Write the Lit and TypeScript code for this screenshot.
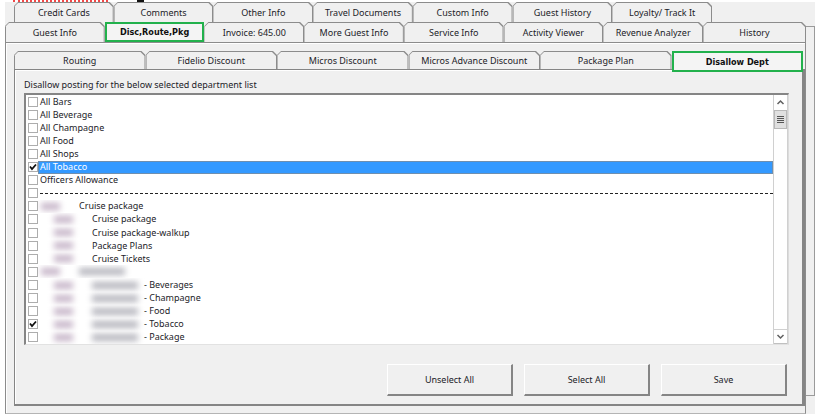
import { LitElement, html, css, svg, nothing } from "lit";
import { customElement, property, state } from "lit/decorators.js";
import { classMap } from "lit/directives/class-map.js";

interface Dept {
  name: string;
  kind: "plain" | "group" | "child" | "hidden-group" | "hidden-child" | "rule";
  checked?: boolean;
  selected?: boolean;
}

const BACK_TABS = ["Credit Cards", "Comments", "Other Info", "Travel Documents", "Custom Info", "Guest History", "Loyalty/ Track It"];
const FRONT_TABS = ["Guest Info", "Disc,Route,Pkg", "Invoice: 645.00", "More Guest Info", "Service Info", "Activity Viewer", "Revenue Analyzer", "History"];
const SUB_TABS = ["Routing", "Fidelio Discount", "Micros Discount", "Micros Advance Discount", "Package Plan", "Disallow Dept"];

const DEPTS: Dept[] = [
  { name: "All Bars", kind: "plain" },
  { name: "All Beverage", kind: "plain" },
  { name: "All Champagne", kind: "plain" },
  { name: "All Food", kind: "plain" },
  { name: "All Shops", kind: "plain" },
  { name: "All Tobacco", kind: "plain", checked: true, selected: true },
  { name: "Officers Allowance", kind: "plain" },
  { name: "", kind: "rule" },
  { name: "Cruise package", kind: "group" },
  { name: "Cruise package", kind: "child" },
  { name: "Cruise package-walkup", kind: "child" },
  { name: "Package Plans", kind: "child" },
  { name: "Cruise Tickets", kind: "child" },
  { name: "", kind: "hidden-group" },
  { name: "- Beverages", kind: "hidden-child" },
  { name: "- Champagne", kind: "hidden-child" },
  { name: "- Food", kind: "hidden-child" },
  { name: "- Tobacco", kind: "hidden-child", checked: true },
  { name: "- Package", kind: "hidden-child" },
];

@customElement("tab-strip")
class TabStrip extends LitElement {
  @property({ type: Array }) tabs: string[] = [];
  @property() active = "";

  static styles = css`
    :host { display: grid; grid-auto-flow: column; grid-auto-columns: minmax(0, 1fr); }
    :host(.front) { grid-template-columns: repeat(7, minmax(0, 1fr)) 103px; }
    .tab {
      position: relative;
      z-index: 0;
      border: 0;
      padding: 2px 0 0;
      font: inherit;
      color: #1c1c28;
      background: #8c8c8c;
      white-space: nowrap;
      clip-path: polygon(0 4px, 4px 0, calc(100% - 4px) 0, 100% 4px, 100% 100%, 0 100%);
    }
    .tab::before {
      content: "";
      position: absolute;
      inset: 1px 1px 0 0;
      z-index: -1;
      background: #f0f0f0;
      clip-path: polygon(0 4px, 4px 0, calc(100% - 4px) 0, 100% 4px, 100% 100%, 0 100%);
      border-left: 1px solid #b8b8b8;
    }
    .tab:first-child::before { border-left-color: #8c8c8c; }
    .tab.active {
      z-index: 1;
      clip-path: none;
      font-family: "DejaVu Sans Condensed", sans-serif;
      font-weight: bold;
      color: #101010;
      background: #f4f4f4;
      border: 2px solid #22b14c;
      padding: 0;
    }
    .tab.active::before { content: none; }
    :host(.sub) .active { margin-bottom: -3px; }
  `;

  render() {
    return this.tabs.map(
      (t) => html`<button class=${classMap({ tab: true, active: t === this.active })} @click=${() => (this.active = t)}>${t}</button>`
    );
  }
}

@customElement("app-root")
class AppRoot extends LitElement {
  @state() private depts = DEPTS;

  static styles = css`
    :host {
      display: flex;
      flex-direction: column;
      box-sizing: border-box;
      min-height: 100vh;
      padding-left: 5px;
      background: #fff;
      color: #1c1c28;
      font: 9px/12px "Noto Sans", "Open Sans", sans-serif;
    }
    .caption { display: flex; gap: 29px; height: 2px; padding-left: 8px; }
    .squiggle { width: 95px; height: 0; border-top: 2px dotted #f04848; }
    .descender { width: 7px; background: #111; }
    .frame { flex: 1; display: grid; grid-template-columns: minmax(0, 1fr) 9px; background: #f0f0f0; }
    .main { display: flex; flex-direction: column; }
    .back { height: 20px; margin: 0 94px 0 9px; }
    .front { height: 20px; }
    .outer {
      flex: 1;
      display: flex;
      flex-direction: column;
      border: 1px solid #8c8c8c;
      border-bottom-color: #b4b4b4;
      box-shadow: inset 1px 1px #fff;
      padding: 8px 0 7px 8px;
    }
    .sub { height: 18px; margin-right: 2px; }
    .inner {
      flex: 1;
      display: flex;
      flex-direction: column;
      border: solid #858585;
      border-width: 1px 3px 2px 1px;
      box-shadow: inset 1px 1px #fff;
      padding: 9px 13px 8px 9px;
    }
    .title { margin: 0; height: 14px; font: inherit; }
    .listbox {
      flex: 1;
      display: grid;
      grid-template-columns: minmax(0, 1fr) 15px;
      border: solid #858585;
      border-width: 2px 1px 1px 2px;
      border-right-color: #dcdcdc;
      border-bottom-color: #e2e2e2;
      background: #fff;
    }
    .rows { display: grid; grid-auto-rows: minmax(0, 1fr); margin: 0; padding: 0; list-style: none; }
    .row { display: flex; align-items: center; padding-left: 2px; min-height: 13px; }
    .row label { flex: 1; display: flex; align-items: center; height: 100%; padding-left: 2px; white-space: pre; overflow: hidden; }
    .box {
      appearance: none;
      flex: none;
      box-sizing: border-box;
      width: 10px;
      height: 10px;
      margin: 0;
      border: 1px solid #adadad;
      background: #fff;
    }
    .tick { position: relative; display: flex; }
    .tick svg { position: absolute; inset: 0; pointer-events: none; }
    .row.selected label { background: #3399ff; color: #fff; box-shadow: inset 0 0 0 1px #6f8fae; }
    .dash { flex: 1; border-top: 1px dashed #222; }
    .blur { flex: none; height: 7px; filter: blur(3px); background: #c4b2c6; }
    .code { width: 19px; margin-left: 1px; margin-right: 19px; }
    .sub-code { margin-left: 14px; }
    .name { width: 46px; background: #b4b4bc; }
    .dim { margin-right: 6px; }
    .scroll { display: flex; flex-direction: column; border-left: 1px solid #d0d0d0; border-right: 1px solid #d0d0d0; }
    .arrow { display: block; height: 15px; border: 0; padding: 0; background: #fff; }
    .arrow.down { margin-top: auto; border-top: 1px solid #d0d0d0; border-bottom: 1px solid #c0c0c0; }
    .thumb { display: flex; justify-content: center; align-items: center; height: 17px; border: 1px solid #b8b8b8; background: #e0e0e0; }
    .actions { display: flex; justify-content: flex-end; gap: 11px; padding: 19px 2px 0 0; }
    .action {
      width: 126px;
      height: 32px;
      padding: 0;
      font: inherit;
      color: inherit;
      background: #f0f0f0;
      border: solid #858585;
      border-width: 1px 2px 2px 1px;
      border-top-color: #fff;
      border-left-color: #fff;
    }
    .edge { margin: 24px 0 18px; border: 1px solid #9a9a9a; border-left: 0; }
  `;

  private toggle(i: number) {
    this.depts = this.depts.map((d, n) => (n === i ? { ...d, checked: !d.checked } : d));
  }

  private setAll(checked: boolean) {
    this.depts = this.depts.map((d) => ({ ...d, checked }));
  }

  private masks(d: Dept) {
    switch (d.kind) {
      case "group":
        return html`<span class="blur code"></span>`;
      case "child":
        return html`<span class="blur code sub-code"></span>`;
      case "hidden-group":
        return html`<span class="blur code"></span><span class="blur name"></span>`;
      case "hidden-child":
        return html`<span class="blur code sub-code"></span><span class="blur name dim"></span>`;
      case "rule":
        return html`<span class="dash"></span>`;
      default:
        return nothing;
    }
  }

  private row(d: Dept, i: number) {
    const tick = svg`<path d="M2 4.5 L4 7 L8 2.5" fill="none" stroke="#111" stroke-width="1.8"/>`;
    return html`<li class=${classMap({ row: true, selected: !!d.selected })}>
      <span class="tick">
        <input class="box" type="checkbox" id="dept-${i}" .checked=${!!d.checked} @change=${() => this.toggle(i)} />
        ${d.checked ? html`<svg width="10" height="10" viewBox="0 0 10 10">${tick}</svg>` : nothing}
      </span>
      <label for="dept-${i}">${this.masks(d)}${d.name}</label>
    </li>`;
  }

  render() {
    return html`
      <div class="caption"><span class="squiggle"></span><span class="descender"></span></div>
      <div class="frame">
        <main class="main">
          <tab-strip class="back" .tabs=${BACK_TABS}></tab-strip>
          <tab-strip class="front" .tabs=${FRONT_TABS} active="Disc,Route,Pkg"></tab-strip>
          <section class="outer">
            <tab-strip class="sub" .tabs=${SUB_TABS} active="Disallow Dept"></tab-strip>
            <section class="inner">
              <h1 class="title">Disallow posting for the below selected department list</h1>
              <div class="listbox">
                <ul class="rows">${this.depts.map((d, i) => this.row(d, i))}</ul>
                <div class="scroll">
                  <button class="arrow" aria-label="Scroll up">
                    <svg width="13" height="14" viewBox="0 0 13 14"><path d="M3.5 9 L6.5 6 L9.5 9" fill="none" stroke="#606060" stroke-width="1.5" /></svg>
                  </button>
                  <div class="thumb">
                    <svg width="7" height="8" viewBox="0 0 7 8"><path d="M0 .5H7M0 2.5H7M0 4.5H7M0 6.5H7" stroke="#555" /></svg>
                  </div>
                  <button class="arrow down" aria-label="Scroll down">
                    <svg width="13" height="13" viewBox="0 0 13 13"><path d="M3.5 5 L6.5 8 L9.5 5" fill="none" stroke="#606060" stroke-width="1.5" /></svg>
                  </button>
                </div>
              </div>
              <div class="actions">
                <button class="action" @click=${() => this.setAll(false)}>Unselect All</button>
                <button class="action" @click=${() => this.setAll(true)}>Select All</button>
                <button class="action">Save</button>
              </div>
            </section>
          </section>
        </main>
        <div class="edge"></div>
      </div>
    `;
  }
}
